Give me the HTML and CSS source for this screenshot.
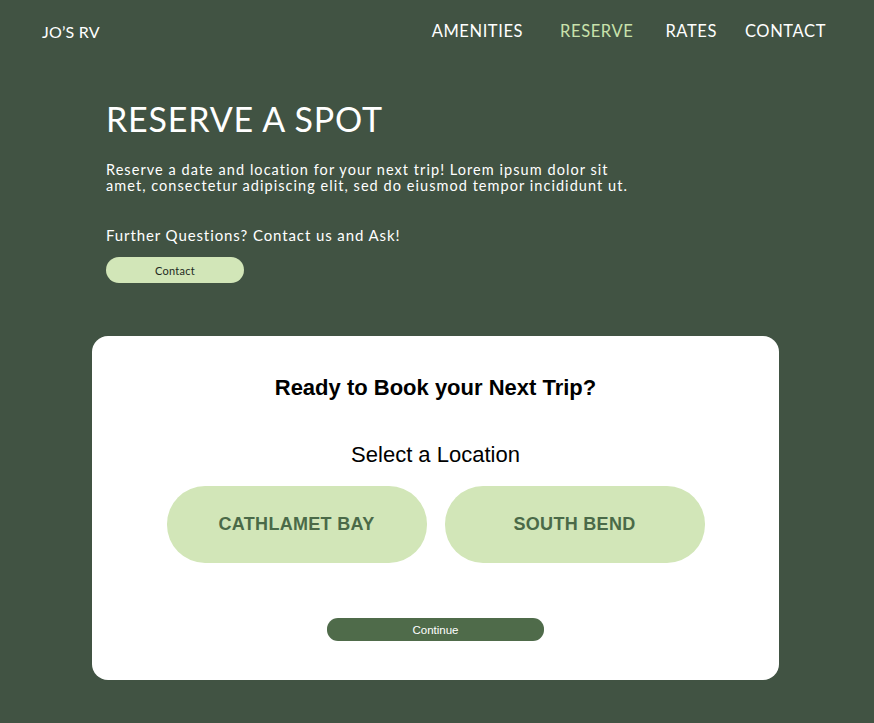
FILE: index.html
```html
<!DOCTYPE html>
<html lang="en">
<head>
<meta charset="utf-8">
<title>Jo's RV - Reserve</title>
<link rel="stylesheet" href="styles.css">
</head>
<body>
<header class="topbar">
  <div class="brand">JO’S RV</div>
  <nav class="nav">
    <a class="nav-link nav-amenities" href="#">AMENITIES</a>
    <a class="nav-link nav-reserve active" href="#">RESERVE</a>
    <a class="nav-link nav-rates" href="#">RATES</a>
    <a class="nav-link nav-contact" href="#">CONTACT</a>
  </nav>
</header>
<main class="main">
  <section class="intro">
    <h1 class="title">RESERVE A SPOT</h1>
    <p class="lead">Reserve a date and location for your next trip! Lorem ipsum dolor sit<br>amet, consectetur adipiscing elit, sed do eiusmod tempor incididunt ut.</p>
    <p class="ask">Further Questions? Contact us and Ask!</p>
    <button class="contact-btn">Contact</button>
  </section>
  <section class="card">
    <h2 class="card-title">Ready to Book your Next Trip?</h2>
    <p class="card-sub">Select a Location</p>
    <div class="locations">
      <button class="loc-btn">CATHLAMET BAY</button>
      <button class="loc-btn">SOUTH BEND</button>
    </div>
    <button class="continue-btn">Continue</button>
  </section>
</main>
</body>
</html>
```
FILE: styles.css
```css
* { box-sizing: border-box; }
html, body { margin: 0; padding: 0; }
body {
  background: #415343;
  width: 874px;
  height: 723px;
  overflow: hidden;
  font-family: "Lato", "Open Sans", sans-serif;
  color: #ffffff;
}
.topbar {
  display: flex;
  justify-content: space-between;
  align-items: center;
  height: 62px;
  padding: 0 48px 0 42px;
}
.brand {
  font-size: 16px;
  letter-spacing: 0.2px;
}
.nav {
  display: flex;
}
.nav-link {
  color: #ffffff;
  text-decoration: none;
  font-size: 16.5px;
  letter-spacing: 0.6px;
}
.nav-reserve { margin-left: 37px; }
.nav-rates { margin-left: 32px; }
.nav-contact { margin-left: 28px; }
.nav-link.active { color: #c9e2ac; }
.main {
  padding: 0 0 0 92px;
}
.intro {
  padding-left: 14px;
}
.title {
  margin: 36px 0 0;
  font-weight: 400;
  font-size: 34px;
  line-height: 42px;
  letter-spacing: 0.8px;
}
.lead {
  margin: 22px 0 0;
  font-size: 14.5px;
  line-height: 16px;
  letter-spacing: 1.05px;
}
.ask {
  margin: 32px 0 0;
  font-size: 15px;
  line-height: 18px;
  letter-spacing: 0.9px;
}
.contact-btn {
  display: block;
  margin-top: 13px;
  width: 138px;
  height: 26px;
  border: none;
  border-radius: 13px;
  background: #d2e6b8;
  color: #1e2a1e;
  font-family: "Lato", sans-serif;
  font-size: 11px;
  letter-spacing: 0.3px;
  padding: 0;
}
.card {
  margin-top: 53px;
  width: 687px;
  height: 344px;
  background: #ffffff;
  border-radius: 16px;
  display: flex;
  flex-direction: column;
  align-items: center;
  color: #000000;
  font-family: "Liberation Sans", Arial, sans-serif;
}
.card-title {
  margin: 40px 0 0;
  font-size: 22px;
  line-height: 24px;
  font-weight: 700;
}
.card-sub {
  margin: 43px 0 0;
  font-size: 22px;
  line-height: 24px;
}
.locations {
  display: flex;
  gap: 18px;
  margin-top: 19px;
}
.loc-btn {
  width: 260px;
  height: 77px;
  border: none;
  border-radius: 38px;
  background: #d2e6b8;
  color: #4a6a48;
  font-family: "Liberation Sans", Arial, sans-serif;
  font-weight: 700;
  font-size: 18px;
  letter-spacing: 0.3px;
  padding: 0;
}
.continue-btn {
  margin-top: 55px;
  width: 217px;
  height: 23px;
  border: none;
  border-radius: 11px;
  background: #4f6b4a;
  color: #ffffff;
  font-family: "Liberation Sans", Arial, sans-serif;
  font-size: 11.5px;
  padding: 0;
}
```
